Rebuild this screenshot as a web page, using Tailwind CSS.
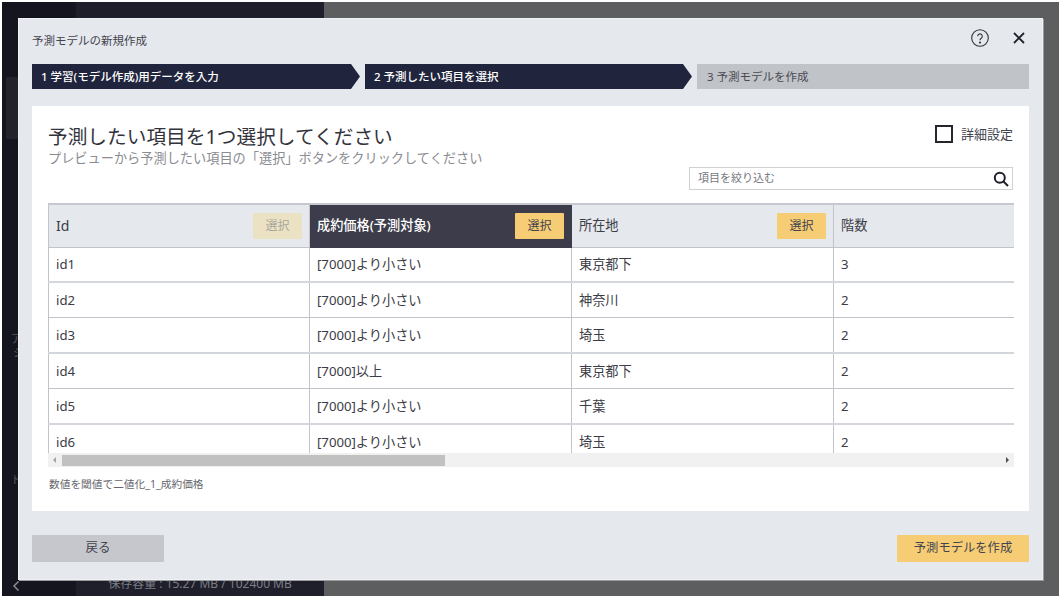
<!DOCTYPE html>
<html lang="ja">
<head>
  <meta charset="UTF-8" />
  <title>予測モデルの新規作成</title>
  <script src="https://cdn.jsdelivr.net/npm/@tailwindcss/browser@4"></script>
</head>
<body class="bg-white overflow-hidden font-['Noto_Sans','Noto_Sans_CJK_JP',sans-serif] text-[#3c3c46]">
<div class="relative w-[1061px] h-[598px] p-[2px]">
  <!-- dimmed app behind the dialog -->
  <div class="flex h-full bg-[#5d5e60]">
    <div class="relative w-[74px] bg-[#15151f] text-[11px] text-[#55565e]">
      <div class="absolute left-[4px] top-[75px] w-[12px] h-[62px] bg-[#23232c]"></div>
      <span class="absolute left-[9px] top-[329px]">ア</span>
      <span class="absolute left-[11px] top-[343px]">シ</span>
      <span class="absolute left-[9px] top-[470px]">ド</span>
      <svg class="absolute left-[10px] bottom-[4px] w-[8px] h-[12px]" viewBox="0 0 8 12" fill="none" stroke="#8a8b92" stroke-width="1.5"><path d="M6.5 1.5L2 6l4.5 4.5"/></svg>
    </div>
    <div class="w-[248px] bg-[#1e1f2a] flex items-end justify-center pb-[2px] text-[12px] leading-[20px] text-[#7c7d84]">保存容量 : 15.27 MB / 102400 MB</div>
  </div>

  <!-- dialog -->
  <div class="absolute left-[18px] top-[18px] w-[1025px] h-[562px] bg-[#e5e8ed] border border-[#f0f1f4] shadow-[1px_1px_0_#9a9b9e] flex flex-col pl-[13px] pr-[13px]">
    <div class="flex items-start justify-between h-[44px] shrink-0">
      <span class="text-[11.5px] leading-[16px] mt-[14px] text-[#44444e]">予測モデルの新規作成</span>
      <div class="flex items-center gap-[23px] pr-[3px] mt-[10px]">
        <svg class="w-[18px] h-[18px]" viewBox="0 0 18 18" fill="none" stroke="#33333c" stroke-width="1.1"><circle cx="9" cy="9" r="8.3"/><path d="M6.7 7.2a2.3 2.3 0 1 1 3.5 2c-.8.5-1.2 1-1.2 2"/><circle cx="9" cy="13.6" r=".5" fill="#33333c"/></svg>
        <svg class="w-[14px] h-[14px]" viewBox="0 0 14 14" fill="none" stroke="#1e1f2a" stroke-width="1.8"><path d="M2 2l10 10M12 2L2 12"/></svg>
      </div>
    </div>

    <!-- steps -->
    <div class="flex h-[25px] shrink-0 gap-[5px] text-[11.5px] mt-[1px]">
      <div class="w-[328px] bg-[#20253d] text-white font-medium flex items-center pl-[9px] [clip-path:polygon(0_0,calc(100%-9px)_0,100%_50%,calc(100%-9px)_100%,0_100%)]">1 学習(モデル作成)用データを入力</div>
      <div class="w-[327px] bg-[#20253d] text-white font-medium flex items-center pl-[9px] [clip-path:polygon(0_0,calc(100%-9px)_0,100%_50%,calc(100%-9px)_100%,0_100%)]">2 予測したい項目を選択</div>
      <div class="flex-1 bg-[#c0c3c8] text-[#4a4a52] flex items-center pl-[10px]">3 予測モデルを作成</div>
    </div>

    <!-- panel -->
    <div class="mt-[17px] h-[405px] shrink-0 bg-white px-[16px] pt-[19px] flex flex-col">
      <div class="flex justify-between h-[42px] shrink-0">
        <div>
          <h1 class="text-[19.7px] leading-[24px] text-[#33333c]">予測したい項目を1つ選択してください</h1>
          <p class="text-[13.2px] leading-[16px] mt-[1px] text-[#8a8c92]">プレビューから予測したい項目の「選択」ボタンをクリックしてください</p>
        </div>
        <label class="flex items-start gap-[8px] text-[13px] text-[#44444e]">
          <span class="w-[18px] h-[18px] border-2 border-[#26262e] bg-white"></span>
          <span class="leading-[19px]">詳細設定</span>
        </label>
      </div>
      <div class="flex justify-end h-[36px] shrink-0">
        <div class="w-[324px] h-[23px] border border-[#cfd1d5] flex items-center justify-between pl-[8px] pr-[3px]">
          <span class="text-[11px] text-[#77787e]">項目を絞り込む</span>
          <svg class="w-[16px] h-[16px]" viewBox="0 0 16 16" fill="none" stroke="#20202a" stroke-width="2"><circle cx="6.8" cy="6.8" r="5"/><path d="M10.5 10.5l4.5 4.5"/></svg>
        </div>
      </div>

      <!-- preview table -->
      <div class="relative w-[966px] h-[264px] overflow-hidden">
        <table class="table-fixed border-collapse w-[1100px] text-[13.2px]">
          <colgroup><col class="w-[261px]"><col class="w-[262px]"><col class="w-[262px]"><col></colgroup>
          <thead>
            <tr class="h-[43px] bg-[#e5e8ed] border-t-2 border-[#c5c8ce]">
              <th class="font-normal text-left px-[7px] border border-[#c0c3c9] border-t-0">
                <div class="flex items-center justify-between"><span class="text-[14px]">Id</span><span class="w-[49px] h-[26px] bg-[#ebe2c4] text-[#a9a79d] text-[12px] flex items-center justify-center rounded-[1px]">選択</span></div>
              </th>
              <th class="font-medium text-left px-[7px] bg-[#3c3c4a] text-white border border-[#3c3c4a] border-t-0">
                <div class="flex items-center justify-between"><span>成約価格(予測対象)</span><span class="w-[49px] h-[26px] bg-[#f6cd74] text-[#44444e] font-normal text-[12px] flex items-center justify-center rounded-[1px]">選択</span></div>
              </th>
              <th class="font-normal text-left px-[7px] border border-[#c0c3c9] border-t-0">
                <div class="flex items-center justify-between"><span>所在地</span><span class="w-[49px] h-[26px] bg-[#f6cd74] text-[#44444e] text-[12px] flex items-center justify-center rounded-[1px]">選択</span></div>
              </th>
              <th class="font-normal text-left px-[7px] border border-[#c0c3c9] border-t-0">階数</th>
            </tr>
          </thead>
          <tbody>
            <tr class="h-[35px] border-b-2 border-[#d3d6dc]"><td class="px-[7px] pt-[2px] border-x border-[#c0c3c9]">id1</td><td class="px-[7px] pt-[2px] border-x border-[#c0c3c9]">[7000]より小さい</td><td class="px-[7px] pt-[2px] border-x border-[#c0c3c9]">東京都下</td><td class="px-[7px] pt-[2px] border-x border-[#c0c3c9]">3</td></tr>
            <tr class="h-[35.5px] border-b border-[#c0c3c9]"><td class="px-[7px] pt-[2px] border-x border-[#c0c3c9]">id2</td><td class="px-[7px] pt-[2px] border-x border-[#c0c3c9]">[7000]より小さい</td><td class="px-[7px] pt-[2px] border-x border-[#c0c3c9]">神奈川</td><td class="px-[7px] pt-[2px] border-x border-[#c0c3c9]">2</td></tr>
            <tr class="h-[35.5px] border-b-2 border-[#d3d6dc]"><td class="px-[7px] pt-[2px] border-x border-[#c0c3c9]">id3</td><td class="px-[7px] pt-[2px] border-x border-[#c0c3c9]">[7000]より小さい</td><td class="px-[7px] pt-[2px] border-x border-[#c0c3c9]">埼玉</td><td class="px-[7px] pt-[2px] border-x border-[#c0c3c9]">2</td></tr>
            <tr class="h-[35.5px] border-b border-[#c0c3c9]"><td class="px-[7px] pt-[2px] border-x border-[#c0c3c9]">id4</td><td class="px-[7px] pt-[2px] border-x border-[#c0c3c9]">[7000]以上</td><td class="px-[7px] pt-[2px] border-x border-[#c0c3c9]">東京都下</td><td class="px-[7px] pt-[2px] border-x border-[#c0c3c9]">2</td></tr>
            <tr class="h-[35.5px] border-b-2 border-[#d3d6dc]"><td class="px-[7px] pt-[2px] border-x border-[#c0c3c9]">id5</td><td class="px-[7px] pt-[2px] border-x border-[#c0c3c9]">[7000]より小さい</td><td class="px-[7px] pt-[2px] border-x border-[#c0c3c9]">千葉</td><td class="px-[7px] pt-[2px] border-x border-[#c0c3c9]">2</td></tr>
            <tr class="h-[35.5px]"><td class="px-[7px] pt-[2px] border-x border-[#c0c3c9]">id6</td><td class="px-[7px] pt-[2px] border-x border-[#c0c3c9]">[7000]より小さい</td><td class="px-[7px] pt-[2px] border-x border-[#c0c3c9]">埼玉</td><td class="px-[7px] pt-[2px] border-x border-[#c0c3c9]">2</td></tr>
          </tbody>
        </table>
        <!-- scrollbar -->
        <div class="absolute left-0 right-0 bottom-0 h-[14px] bg-[#f1f1f1] flex items-center">
          <span class="w-0 h-0 ml-[5px] border-y-[3px] border-y-transparent border-r-[3px] border-r-[#a3a3a3]"></span>
          <span class="ml-[6px] w-[383px] h-[11px] bg-[#c1c1c1]"></span>
          <span class="w-0 h-0 ml-auto mr-[5px] border-y-[3px] border-y-transparent border-l-[3px] border-l-[#505050]"></span>
        </div>
      </div>
      <p class="mt-[9px] pl-[1px] text-[10.7px] text-[#66676d]">数値を閾値で二値化_1_成約価格</p>
    </div>

    <!-- footer -->
    <div class="flex justify-between mt-[24px]">
      <button class="w-[132px] h-[27px] bg-[#c5c7cc] text-[12.5px] text-[#44444e] rounded-[1px]">戻る</button>
      <button class="w-[132px] h-[27px] bg-[#f6cd74] text-[12.3px] text-[#44444e] rounded-[1px]">予測モデルを作成</button>
    </div>
  </div>
</div>
</body>
</html>
